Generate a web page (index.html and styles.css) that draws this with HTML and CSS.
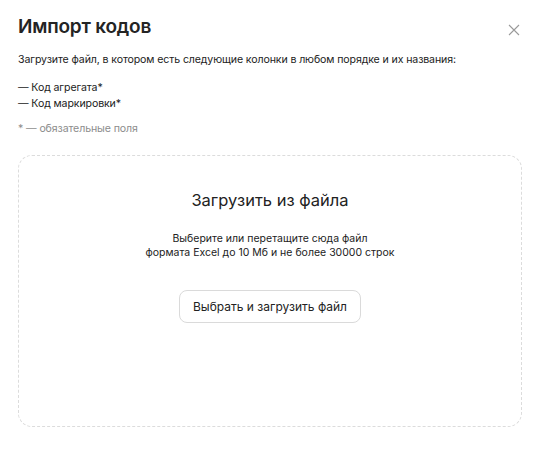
FILE: index.html
```html
<!DOCTYPE html>
<html lang="ru">
<head>
  <meta charset="UTF-8">
  <meta name="viewport" content="width=device-width, initial-scale=1.0">
  <title>Импорт кодов</title>
  <link rel="stylesheet" href="styles.css">
</head>
<body>
<div class="modal">
  <div class="modal-head">
    <h1 class="title">Импорт кодов</h1>
    <button class="close" aria-label="Закрыть">
      <svg width="12" height="12" viewBox="0 0 12 12"><path d="M1 1L11 11M11 1L1 11" stroke="#9a9a9a" stroke-width="1.1"/></svg>
    </button>
  </div>
  <p class="intro">Загрузите файл, в котором есть следующие колонки в любом порядке и их названия:</p>
  <ul class="cols">
    <li>— Код агрегата*</li>
    <li>— Код маркировки*</li>
  </ul>
  <p class="note">* — обязательные поля</p>

  <div class="drop">
    <h2 class="drop-title">Загрузить из файла</h2>
    <p class="drop-text">Выберите или перетащите сюда файл<br>формата Excel до 10 Мб и не более 30000 строк</p>
    <button class="pick">Выбрать и загрузить файл</button>
  </div>
</div>
</body>
</html>
```

FILE: styles.css
```css
body {
  margin: 0;
  background: #fff;
  font-family: Inter, "Noto Sans", sans-serif;
  color: #222;
}
.modal {
  padding: 15px 18px 0 18px;
}
.modal-head {
  display: flex;
  justify-content: space-between;
  align-items: center;
}
.title {
  margin: 0;
  font-size: 19px;
  font-weight: 600;
  line-height: 24px;
  letter-spacing: -0.2px;
  color: #242424;
}
.close {
  border: 0;
  background: none;
  padding: 0;
  margin: 6px 2px 0 0;
  display: flex;
  cursor: pointer;
}
.intro {
  margin: 14px 0 0;
  font-size: 10.6px;
  line-height: 14px;
  letter-spacing: -0.12px;
}
.cols {
  list-style: none;
  margin: 13px 0 0;
  padding: 0;
  font-size: 10.6px;
  line-height: 16px;
  letter-spacing: -0.12px;
}
.note {
  margin: 10px 0 0;
  font-size: 10.6px;
  line-height: 14px;
  letter-spacing: -0.12px;
  color: #8c8c8c;
}
.drop {
  margin-top: 19px;
  height: 272px;
  box-sizing: border-box;
  border: 1px dashed #dcdcdc;
  border-radius: 14px;
  display: flex;
  flex-direction: column;
  align-items: center;
  padding-top: 33px;
}
.drop-title {
  margin: 0;
  font-size: 16.5px;
  font-weight: 400;
  line-height: 22px;
}
.drop-text {
  margin: 21px 0 0;
  font-size: 10.5px;
  line-height: 14px;
  text-align: center;
}
.pick {
  margin-top: 30px;
  height: 33px;
  padding: 0 13px;
  border: 1px solid #dadada;
  border-radius: 8px;
  background: #fff;
  font-family: inherit;
  font-size: 12px;
  color: #222;
  cursor: pointer;
}
```
